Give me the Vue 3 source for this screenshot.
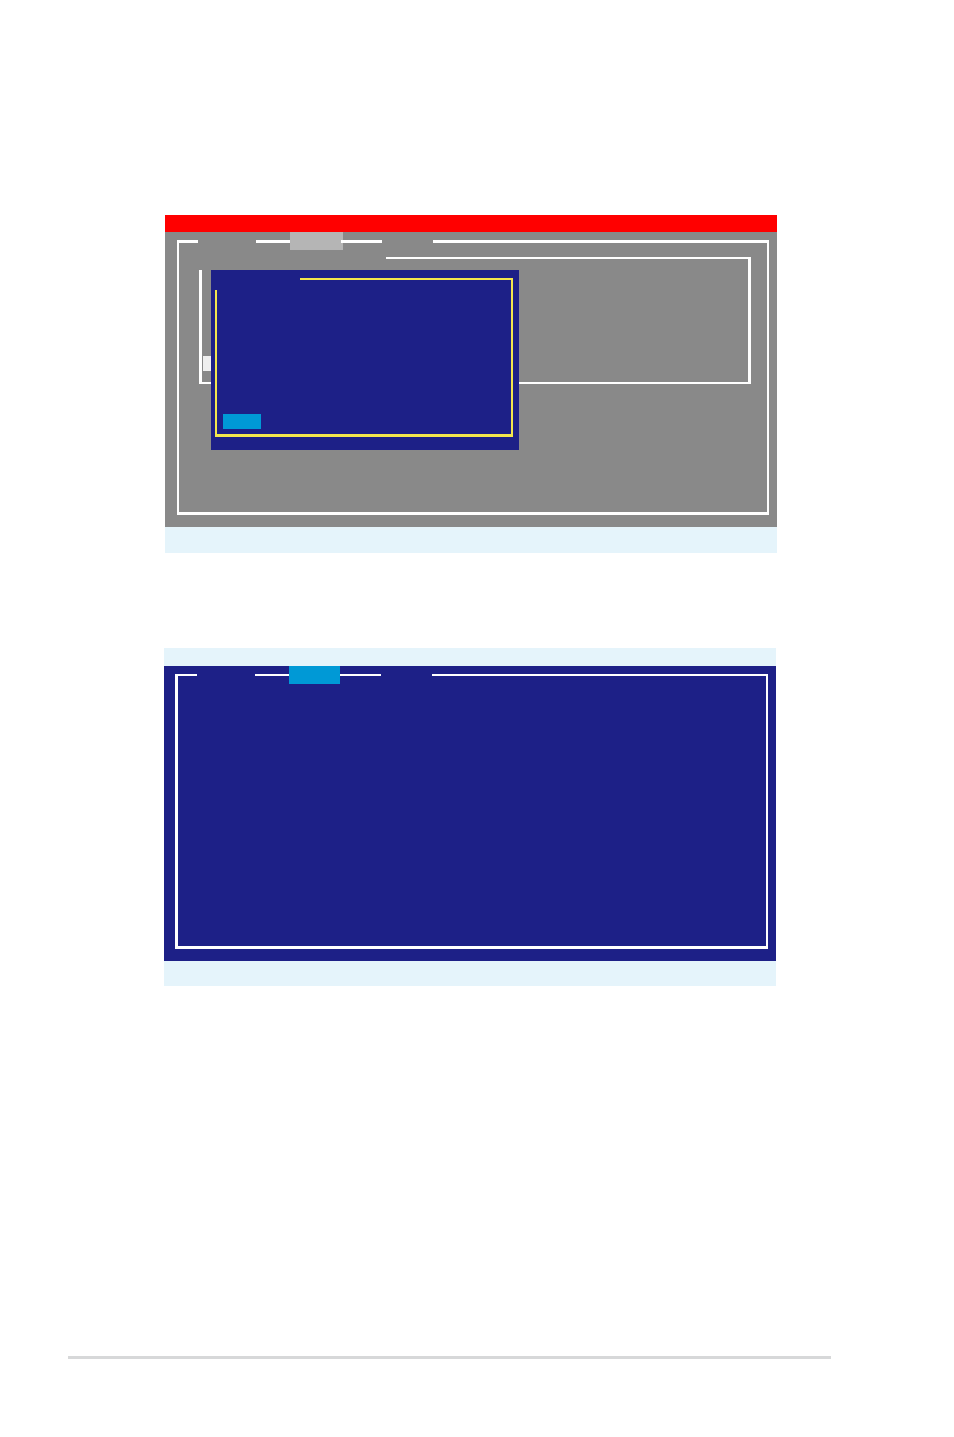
<script setup>
// a segment is either a piece of the frame line or a menu slot; width 0 fills the rest
const setupMenu = [
  { type: 'line', width: 21 },
  { type: 'item', width: 58, label: 'File' },
  { type: 'line', width: 34 },
  { type: 'item', width: 53, label: 'Edit', active: true },
  { type: 'line', width: 41, overlap: true },
  { type: 'item', width: 51, label: 'Help' },
  { type: 'line', width: 0 },
]

const mainMenu = [
  { type: 'line', width: 22 },
  { type: 'item', width: 58, label: 'File' },
  { type: 'line', width: 34 },
  { type: 'item', width: 51, label: 'Edit', active: true },
  { type: 'line', width: 41 },
  { type: 'item', width: 51, label: 'Help' },
  { type: 'line', width: 0 },
]

const screens = [
  { name: 'setup', menu: setupMenu, dialog: true },
  { name: 'main', menu: mainMenu, dialog: false },
]

const segStyle = (seg) => (seg.width ? { width: seg.width + 'px' } : { flex: '1' })
</script>

<template>
  <div class="page">
    <main>
      <section v-for="s in screens" :key="s.name" class="screen" :class="s.name">
        <header class="title-strip" />

        <div class="panel">
          <nav class="menu">
            <template v-for="(seg, i) in s.menu" :key="i">
              <button
                v-if="seg.type === 'item'"
                type="button"
                class="menu-item"
                :class="{ active: seg.active }"
                :style="segStyle(seg)"
                :aria-label="seg.label"
              />
              <span v-else class="menu-line" :class="{ overlap: seg.overlap }" :style="segStyle(seg)" />
            </template>
          </nav>

          <div class="frame">
            <div v-if="s.dialog" class="group">
              <div class="group-top" />
              <div class="group-body">
                <span class="marker" />

                <!-- dialog lies over the group box -->
                <div class="dialog" role="dialog" aria-label="Dialog">
                  <div class="dialog-frame">
                    <div class="dialog-top" />
                    <div class="dialog-body">
                      <button type="button" class="dialog-btn" aria-label="OK" />
                    </div>
                  </div>
                </div>
              </div>
            </div>
          </div>
        </div>

        <footer class="status-strip" />
      </section>
    </main>

    <hr class="page-rule">
  </div>
</template>

<style>
body { background: #fff; }
</style>

<style scoped>
.page {
  box-sizing: border-box;
  min-height: 100vh;
  display: flex;
  flex-direction: column;
  padding: 215px 123px 78px 68px;
  font-family: "Liberation Sans", Arial, sans-serif;
}

main {
  display: flex;
  flex-direction: column;
  gap: 95px;
}

button {
  appearance: none;
  border: none;
  padding: 0;
  background: transparent;
}

/* screens */
.screen.setup { margin: 0 54px 0 97px; }
.screen.main  { margin: 0 55px 0 96px; }

.title-strip { height: 18px; background: #e5f4fb; }
.status-strip { height: 25px; background: #e5f4fb; }
.setup .title-strip { height: 17px; background: #ff0000; }
.setup .status-strip { height: 26px; }

.panel {
  display: grid;
  padding: 0 8px 12px 11px;
  background: #1d2087;
}
.setup .panel {
  padding-left: 12px;
  background: #898989;
}

/* menu and frame share one cell, the menu forms the frame's top edge */
.menu,
.frame { grid-area: 1 / 1; }

.menu {
  display: flex;
  height: 18px;
}
.menu-item { flex-shrink: 0; height: 18px; }
.menu-item.active { background: #0099d6; }
.setup .menu-item.active { background: #b5b5b5; }

.menu-line {
  height: 2px;
  margin-top: 8px;
  background: #fff;
}
.setup .menu-line { height: 3px; }
.menu-line.overlap {
  margin-left: -2px;
  z-index: 1;
}

.frame {
  box-sizing: border-box;
  min-height: 275px;
  margin-top: 8px;
  border: solid #fff;
  border-width: 0 2px 3px 3px;
}
.setup .frame {
  border-left-width: 2px;
  padding: 17px 16px 0 20px;
}

/* group box */
.group { border-right: 3px solid #fff; }
.group-top {
  height: 2px;
  margin-left: 187px;
  background: #fff;
}
.group-body {
  position: relative;
  box-sizing: border-box;
  height: 114px;
  margin-top: 11px;
  padding: 86px 0 0 1px;
  border: solid #fff;
  border-width: 0 0 2px 3px;
}
.marker {
  display: block;
  width: 8px;
  height: 15px;
  background: #efefef;
}

/* dialog */
.dialog {
  position: absolute;
  top: 0;
  left: 9px;
  box-sizing: border-box;
  width: 308px;
  padding: 8px 6px 13px 4px;
  background: #1d2087;
}
.dialog-frame { border-right: 2px solid #f3e64d; }
.dialog-top {
  height: 2px;
  margin-left: 85px;
  background: #f3e64d;
}
.dialog-body {
  display: flex;
  align-items: flex-end;
  box-sizing: border-box;
  height: 147px;
  margin-top: 10px;
  padding: 0 0 5px 6px;
  border: solid #f3e64d;
  border-width: 0 0 3px 2px;
}
.dialog-btn {
  width: 38px;
  height: 15px;
  background: #0099d6;
}

.page-rule {
  width: 100%;
  height: 3px;
  margin: auto 0 0;
  border: none;
  background: #d7d8d9;
}
</style>
